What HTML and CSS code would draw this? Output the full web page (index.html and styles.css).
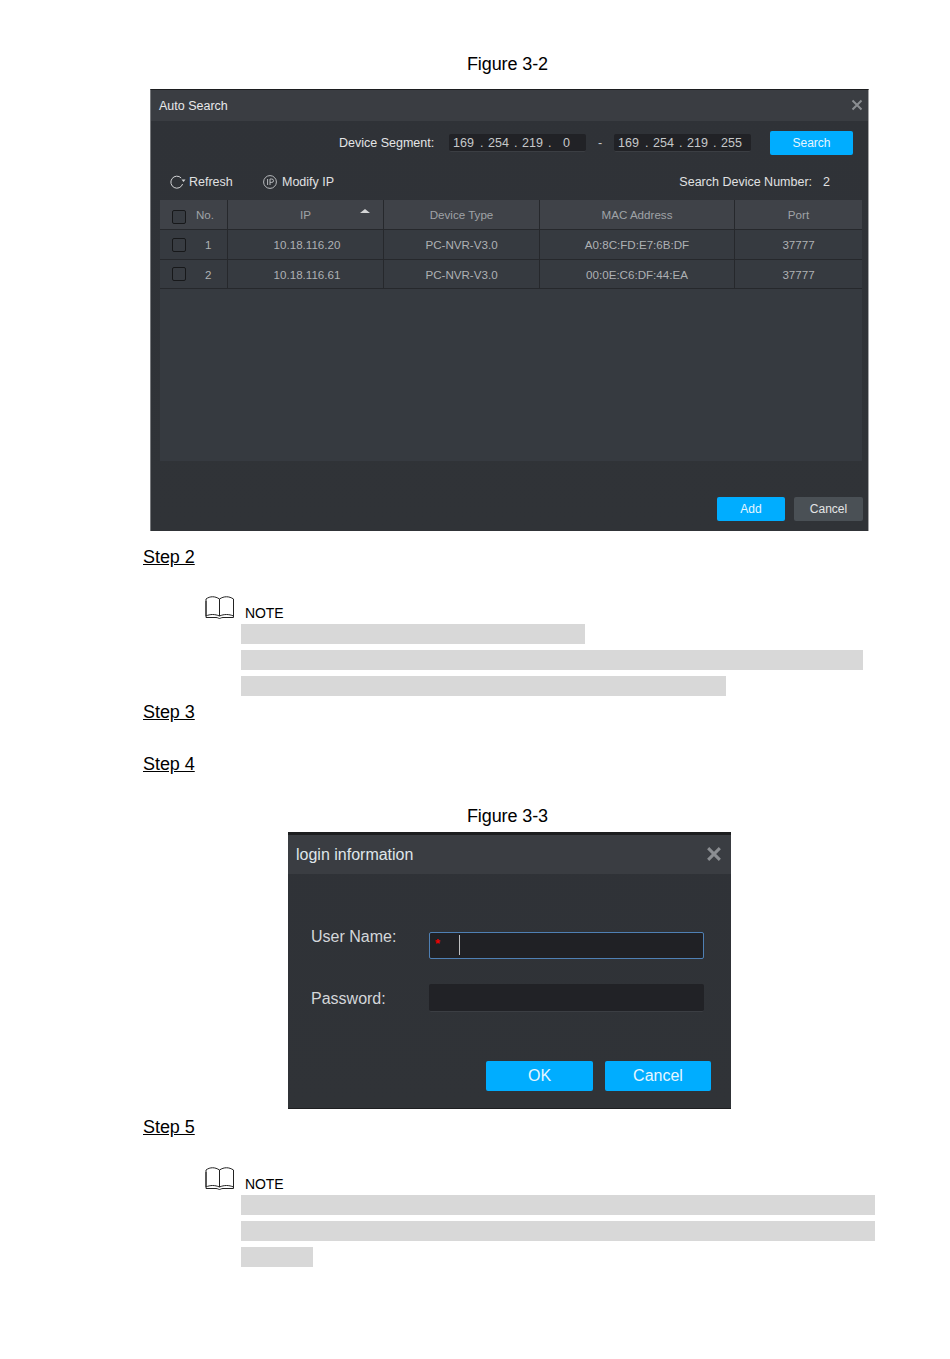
FILE: index.html
```html
<!DOCTYPE html>
<html lang="en">
<head>
<meta charset="utf-8">
<title>Figure 3-2</title>
<link rel="stylesheet" href="styles.css">
</head>
<body>
<main class="page">
  <p class="caption cap-first">Figure 3-2</p>
  <section class="dlg search">
    <header class="search-title"><span>Auto Search</span>
      <svg class="close" viewBox="0 0 12 12"><path d="M1.5 1.5l9 9M10.5 1.5l-9 9"/></svg>
    </header>
    <div class="segment">
      <span class="seg-label">Device Segment:</span>
      <div class="ip"><span>169</span><i>.</i><span>254</span><i>.</i><span>219</span><i>.</i><span>0</span></div>
      <span class="dash">-</span>
      <div class="ip"><span>169</span><i>.</i><span>254</span><i>.</i><span>219</span><i>.</i><span>255</span></div>
      <button class="btn-blue btn-search">Search</button>
    </div>
    <div class="tools">
      <span class="tool tool-refresh">
        <svg class="ico" viewBox="0 0 16 14"><path d="M11.2 3A6 6 0 1 0 12.6 9"/><path class="fill" d="M11.5 4.6h4l-2 2.4z"/></svg>Refresh
      </span>
      <span class="tool tool-modify">
        <svg class="ico ico-ip" viewBox="0 0 14 14"><circle cx="7" cy="7" r="6.4"/><path d="M4.6 4v6M7 10V4h1.8a1.6 1.6 0 0 1 0 3.4H7"/></svg>Modify IP
      </span>
      <span class="count">Search Device Number:<b>2</b></span>
    </div>
    <div class="table">
      <div class="row head">
        <div class="c c-no"><span class="check"></span><span class="no-label">No.</span></div>
        <div class="c c-ip">IP<span class="sort"></span></div>
        <div class="c c-type">Device Type</div>
        <div class="c c-mac">MAC Address</div>
        <div class="c c-port">Port</div>
      </div>
      <div class="row">
        <div class="c c-no"><span class="check"></span><span class="no-val">1</span></div>
        <div class="c c-ip">10.18.116.20</div>
        <div class="c c-type">PC-NVR-V3.0</div>
        <div class="c c-mac">A0:8C:FD:E7:6B:DF</div>
        <div class="c c-port">37777</div>
      </div>
      <div class="row">
        <div class="c c-no"><span class="check"></span><span class="no-val">2</span></div>
        <div class="c c-ip">10.18.116.61</div>
        <div class="c c-type">PC-NVR-V3.0</div>
        <div class="c c-mac">00:0E:C6:DF:44:EA</div>
        <div class="c c-port">37777</div>
      </div>
    </div>
    <footer class="search-foot">
      <button class="btn-blue btn-add">Add</button>
      <button class="btn-grey">Cancel</button>
    </footer>
  </section>

  <p class="step step2">Step 2</p>
  <div class="note note1">
    <svg class="book" viewBox="0 0 30 23"><path d="M1 3C5 0 10 0 14.5 3V20C10 18 5 18 1 20zM14.5 3C19 0 24 0 28.5 3V20C24 18 19 18 14.5 20z"/><path d="M1 5v16.5h10c2 0 2.5 1 3.5 1s1.5-1 3.5-1h10.5V5"/></svg>
    <span>NOTE</span>
  </div>
  <div class="bars">
    <div class="bar w344"></div>
    <div class="bar w622"></div>
    <div class="bar w485"></div>
  </div>
  <p class="step step3">Step 3</p>
  <p class="step step4">Step 4</p>
  <p class="caption cap-second">Figure 3-3</p>
  <section class="dlg login">
    <header class="login-title"><span>login information</span>
      <svg class="close close-lg" viewBox="0 0 12 12"><path d="M1 1l10 10M11 1L1 11"/></svg>
    </header>
    <div class="form">
      <div class="field field-user">
        <label>User Name:</label>
        <div class="input focus"><span class="star">*</span><span class="cursor"></span></div>
      </div>
      <div class="field field-pass">
        <label>Password:</label>
        <div class="input"></div>
      </div>
    </div>
    <footer class="login-foot">
      <button class="btn-blue btn-ok">OK</button>
      <button class="btn-blue btn-cancel">Cancel</button>
    </footer>
  </section>
  <p class="step step5">Step 5</p>
  <div class="note note2">
    <svg class="book" viewBox="0 0 30 23"><path d="M1 3C5 0 10 0 14.5 3V20C10 18 5 18 1 20zM14.5 3C19 0 24 0 28.5 3V20C24 18 19 18 14.5 20z"/><path d="M1 5v16.5h10c2 0 2.5 1 3.5 1s1.5-1 3.5-1h10.5V5"/></svg>
    <span>NOTE</span>
  </div>
  <div class="bars">
    <div class="bar w634"></div>
    <div class="bar w634"></div>
    <div class="bar w72"></div>
  </div>
</main>
</body>
</html>
```
FILE: styles.css
```css
* { box-sizing: border-box; }
html, body { margin: 0; background: #fff; }
body { font-family: "Liberation Sans", Arial, sans-serif; color: #000; }
.page { width: 950px; height: 1359px; padding: 53px 0 0 143px; overflow: hidden; }
p { margin: 0; }
button { font-family: inherit; border: 0; padding: 0; color: #e6f6ff; border-radius: 2px; }

.caption { width: 729px; text-align: center; font-size: 18px; line-height: 22px; letter-spacing: -0.1px; }
.cap-second { margin-top: 30px; }
.step { font-size: 18px; line-height: 22px; text-decoration: underline; width: 52px; letter-spacing: -0.05px; }
.step2 { margin-top: 15px; }
.step3 { margin-top: 5px; }
.step4 { margin-top: 30px; }
.step5 { margin-top: 7px; }

.note { display: flex; align-items: flex-end; margin-left: 62px; height: 24px; font-size: 14px; line-height: 16px; }
.note span { margin-left: 10px; letter-spacing: -0.1px; margin-bottom: -1px; }
.note1 { margin-top: 28px; }
.note2 { margin-top: 29px; }
.book { width: 30px; height: 23px; margin-bottom: 1px; fill: none; stroke: #222; stroke-width: 1; }
.bars { margin: 4px 0 0 98px; display: flex; flex-direction: column; gap: 6px; }
.bar { height: 20px; background: #d8d8d8; }
.w344 { width: 344px; }
.w622 { width: 622px; }
.w485 { width: 485px; }
.w634 { width: 634px; }
.w72 { width: 72px; }

.dlg { background: linear-gradient(#2f3237, #303337); color: #d8dadc; }
.close { fill: none; stroke: #8b8e92; stroke-width: 2; }

/* Auto Search dialog */
.search { width: 719px; height: 442px; margin: 14px 0 0 7px; border-top: 1px solid #1c1d1f; border-left: 1px solid #77797c; border-right: 1px solid #a5a6a8; display: flex; flex-direction: column; }
.search-title { height: 31px; flex: none; background: #3a3d42; display: flex; justify-content: space-between; align-items: center; padding: 0 5px 0 8px; font-size: 12.5px; color: #e8e9ea; }
.search-title .close { width: 12px; height: 12px; margin-top: -1px; }
.segment { height: 42px; flex: none; display: flex; align-items: center; font-size: 12.5px; padding-left: 188px; padding-top: 2px; }
.seg-label { width: 110px; color: #e4e5e6; }
.ip { width: 137px; height: 18px; background: #212226; border-radius: 2px; border-bottom: 1px solid #3b3e43; display: flex; align-items: center; padding-left: 4px; color: #c6c8ca; font-size: 12.5px; }
.ip span { width: 27px; }
.ip span:first-child { width: 28px; }
.ip span:last-child { text-align: center; width: 21px; }
.ip i { width: 7px; font-style: normal; margin-left: -1px; margin-right: 1px; }
.dash { width: 28px; text-align: center; color: #c6c8ca; }
.btn-blue { background: #00adff; }
.btn-search { width: 83px; height: 24px; margin-left: 19px; font-size: 12px; }
.tools { height: 37px; flex: none; display: flex; align-items: center; font-size: 12.5px; color: #e0e1e2; padding: 0 38px 0 19px; }
.tool { display: flex; align-items: center; }
.tool-refresh { width: 93px; }
.ico { width: 16px; height: 14px; fill: none; stroke: #d2d3d5; stroke-width: 1; flex: none; margin-right: 3px; }
.ico .fill { fill: #d2d3d5; stroke: none; }
.ico-ip { width: 14px; height: 14px; margin-right: 5px; stroke: #b8babd; }
.count { margin-left: auto; }
.count b { font-weight: 400; margin-left: 11px; }

.table { margin: 0 6px 0 9px; height: 261px; flex: none; background: #363a40; font-size: 11.6px; color: #aeb1b4; }
.row { display: grid; grid-template-columns: 68px 156px 156px 195px 127px; height: 30px; border-bottom: 1px solid #26282c; }
.row + .row + .row { height: 29px; }
.row.head { background: #3f4248; height: 30px; color: #9fa3a7; }
.c { display: flex; align-items: center; justify-content: center; border-right: 1px solid #26282c; position: relative; }
.c-port { border-right: 0; }
.head .c { padding-bottom: 1px; }
.c-no { justify-content: flex-start; padding-left: 12px; }
.check { width: 14px; height: 14px; background: #383c42; border: 1px solid #17181a; border-radius: 2px; flex: none; }
.head .check { margin-top: 6px; }
.no-label { margin-left: 10px; }
.no-val { margin-left: 19px; }
.c-ip { padding-left: 3px; }
.head .c-ip { padding-left: 0; }
.sort { position: absolute; top: 9px; right: 13px; border: 5px solid transparent; border-top: 0; border-bottom: 4px solid #d4d5d6; }

.search-foot { flex: 1; display: flex; justify-content: flex-end; align-items: flex-start; gap: 9px; padding: 36px 5px 0 0; }
.btn-add { width: 68px; height: 24px; font-size: 12px; }
.btn-grey { width: 69px; height: 24px; font-size: 12px; background: #4a5055; color: #e4e5e6; }

/* login dialog */
.login { width: 443px; height: 277px; margin: 5px 0 0 145px; border-top: 3px solid #1d1e20; border-bottom: 1px solid #1d1e20; display: flex; flex-direction: column; }
.login-title { height: 39px; flex: none; background: #3a3d42; display: flex; justify-content: space-between; align-items: center; padding: 0 10px 0 8px; font-size: 16px; color: #dfe6ea; }
.close-lg { width: 14px; height: 14px; stroke-width: 2.6; margin-top: -2px; }
.form { padding: 0 27px 0 23px; flex: none; height: 187px; }
.field { display: flex; justify-content: space-between; }
.field label { font-size: 16px; line-height: 20px; color: #d4d7da; }
.field-user { margin-top: 58px; }
.field-user label { margin-top: -5px; }
.field-pass { margin-top: 25px; }
.field-pass label { margin-top: 5px; }
.input { width: 275px; height: 28px; background: #212226; border-radius: 2px; border-bottom: 1px solid #3b3e43; position: relative; }
.input.focus { height: 27px; border: 1px solid #4f80b4; display: flex; align-items: flex-start; background: #202125; }
.star { color: #f00000; font-size: 13px; font-weight: 700; line-height: 16px; margin: 3px 0 0 5px; width: 24px; }
.cursor { width: 1px; height: 20px; background: #bfc0c2; margin-top: 2px; }
.login-foot { display: flex; justify-content: flex-end; gap: 12px; padding-right: 20px; }
.btn-ok, .btn-cancel { height: 30px; font-size: 16px; }
.btn-ok { width: 107px; }
.btn-cancel { width: 106px; }
```
